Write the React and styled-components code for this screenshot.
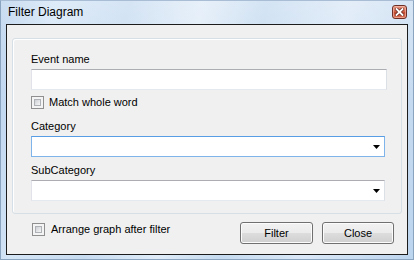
import React from "react";
import styled, { createGlobalStyle } from "styled-components";

const GlobalStyle = createGlobalStyle`
  html, body {
    margin: 0;
    padding: 0;
    background: #ffffff;
  }
  * {
    box-sizing: border-box;
  }
`;

function Dialog() {
  return (
    <Window>
      <TitleBar>
        <Title>Filter Diagram</Title>
        <CloseButton aria-label="Close">
          <svg width="9" height="8" viewBox="0 0 9 8">
            <path d="M1.5 1 L7.5 7 M7.5 1 L1.5 7" stroke="#6b2a20" strokeWidth="3.4" strokeLinecap="square" />
            <path d="M1.5 1 L7.5 7 M7.5 1 L1.5 7" stroke="#ffffff" strokeWidth="1.8" strokeLinecap="square" />
          </svg>
        </CloseButton>
      </TitleBar>
      <Client>
        <GroupBox>
          <Label>Event name</Label>
          <TextBox />
          <CheckRow $top={6} $gap={5}>
            <CheckBox><CheckFill /></CheckBox>
            Match whole word
          </CheckRow>
          <Label $top={10}>Category</Label>
          <ComboBox $focused>
            <Arrow />
          </ComboBox>
          <Label $top={6}>SubCategory</Label>
          <ComboBox>
            <Arrow />
          </ComboBox>
        </GroupBox>
        <Footer>
          <CheckRow $top={1} $gap={6}>
            <CheckBox><CheckFill /></CheckBox>
            Arrange graph after filter
          </CheckRow>
          <Buttons>
            <Button $width={73}>Filter</Button>
            <Button $width={72}>Close</Button>
          </Buttons>
        </Footer>
      </Client>
    </Window>
  );
}

function Arrow() {
  return (
    <ArrowIcon width="7" height="4" viewBox="0 0 7 4">
      <polygon points="0,0 7,0 3.5,4" fill="#000" />
    </ArrowIcon>
  );
}

const Window = styled.div`
  width: 414px;
  height: 260px;
  display: flex;
  flex-direction: column;
  padding: 0 5px 4px 5px;
  border: 1px solid #8aa3bf;
  border-top-color: #a9bdd4;
  background:
    linear-gradient(180deg, rgba(255, 255, 255, 0.25) 0%, rgba(255, 255, 255, 0) 40%),
    linear-gradient(100deg, #b8d1ec 0%, #d4e5f6 12%, #c8dcf1 28%, #e0ecf8 44%, #c6dbf0 58%, #dbe8f7 76%, #bcd5ee 100%);
  font-family: "Liberation Sans", Arial, sans-serif;
  font-size: 11px;
  color: #000;
`;

const TitleBar = styled.div`
  height: 23px;
  display: flex;
  align-items: flex-start;
  padding-left: 2px;
`;

const Title = styled.div`
  font-size: 12px;
  line-height: 15px;
  padding-top: 4px;
  color: #000;
`;

const CloseButton = styled.div`
  margin-left: auto;
  margin-top: 4px;
  margin-right: 1px;
  width: 15px;
  height: 14px;
  border: 1px solid #6e3026;
  border-radius: 3px;
  display: flex;
  align-items: center;
  justify-content: center;
  background: linear-gradient(180deg, #e59a86 0%, #d2654c 45%, #c2492f 55%, #d9735a 100%);
  box-shadow: inset 0 0 0 1px rgba(255, 200, 185, 0.55);
`;

const Client = styled.div`
  flex: 1;
  display: flex;
  flex-direction: column;
  border: 1px solid #1c1c1c;
  background: #f0f0f0;
  padding: 13px 5px 0 5px;
`;

const GroupBox = styled.div`
  display: flex;
  flex-direction: column;
  border: 1px solid #d5dfe5;
  border-radius: 3px;
  box-shadow: inset 1px 1px 0 #ffffff;
  padding: 13px 14px 12px 18px;
`;

const Label = styled.div`
  line-height: 15px;
  margin-top: ${(p) => p.$top || 0}px;
  margin-bottom: 2px;
`;

const TextBox = styled.div`
  height: 21px;
  background: #ffffff;
  border: 1px solid #e3e9ef;
  border-top-color: #abadb3;
  border-left-color: #e2e3ea;
  border-right-color: #dbdfe6;
`;

const ComboBox = styled(TextBox)`
  margin-right: 2px;
  display: flex;
  align-items: center;
  justify-content: flex-end;
  padding-right: 4px;
  ${(p) =>
    p.$focused &&
    `
    border-color: #7eb4ea;
    border-top-color: #569de5;
  `}
`;

const ArrowIcon = styled.svg`
  display: block;
`;

const CheckRow = styled.div`
  display: flex;
  align-items: center;
  gap: ${(p) => p.$gap}px;
  margin-top: ${(p) => p.$top}px;
  height: 13px;
  line-height: 13px;
`;

const CheckBox = styled.span`
  width: 13px;
  height: 13px;
  flex: none;
  border: 1px solid #8f8f8f;
  background: #f4f4f4;
  padding: 2px;
  display: flex;
`;

const CheckFill = styled.span`
  flex: 1;
  border: 1px solid #aeb2b7;
  background: linear-gradient(135deg, #cbcfd3 0%, #e6e7e9 60%, #f6f6f6 100%);
`;

const Footer = styled.div`
  flex: 1;
  display: flex;
  align-items: flex-start;
  justify-content: space-between;
  padding: 8px 8px 0 20px;
`;

const Buttons = styled.div`
  display: flex;
  gap: 9px;
`;

const Button = styled.div`
  width: ${(p) => p.$width}px;
  height: 22px;
  display: flex;
  align-items: center;
  justify-content: center;
  border: 1px solid #707070;
  border-radius: 3px;
  background: linear-gradient(180deg, #f2f2f2 0%, #ebebeb 50%, #dddddd 50%, #cfcfcf 100%);
  box-shadow: inset 0 0 0 1px #fcfcfc;
  color: #000;
`;

export default function App() {
  return (
    <>
      <GlobalStyle />
      <Dialog />
    </>
  );
}
